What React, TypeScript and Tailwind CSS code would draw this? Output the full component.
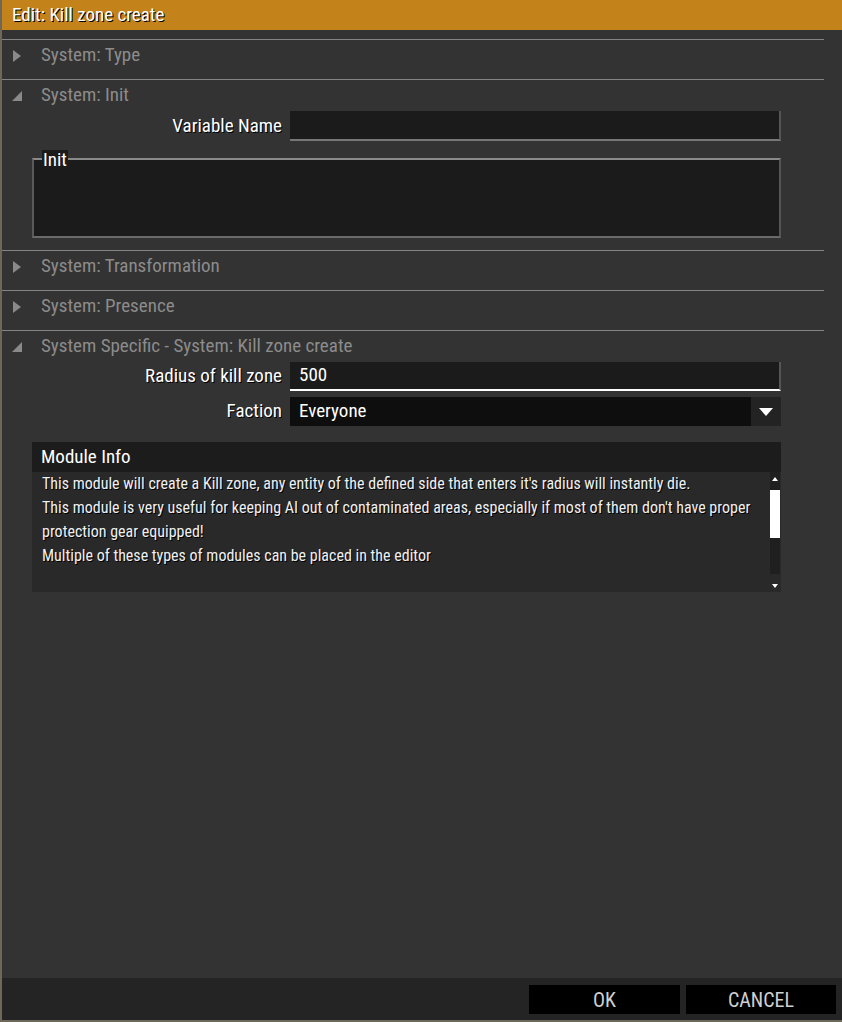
import React from "react";

const font = "font-['Liberation_Sans_Narrow','Roboto_Condensed','Roboto',sans-serif]";

function Caret({ open }: { open: boolean }) {
  if (open) {
    return (
      <svg width="12" height="12" viewBox="0 0 12 12" className="ml-[9px] mr-[18px]">
        <polygon points="11,1 11,11 1,11" fill="#8a8a8a" />
      </svg>
    );
  }
  return (
    <svg width="12" height="12" viewBox="0 0 12 12" className="ml-[9px] mr-[18px]">
      <polygon points="2,0 10,6 2,12" fill="#8a8a8a" />
    </svg>
  );
}

function Section({
  title,
  open,
  children,
  padBottom = "pb-[8px]",
}: {
  title: string;
  open?: boolean;
  children?: React.ReactNode;
  padBottom?: string;
}) {
  return (
    <div className={`border-t border-[#858585] mr-[18px] ${padBottom}`}>
      <div className="h-[31px] flex items-center">
        <Caret open={!!open} />
        <span className="text-[19px] text-[#8c8c8c]">{title}</span>
      </div>
      {children}
    </div>
  );
}

function Label({ text }: { text: string }) {
  return (
    <div className="w-[288px] pr-[8px] text-right text-[19px] text-white [text-shadow:1px_1px_0_#000]">
      {text}
    </div>
  );
}

export default function App() {
  return (
    <div className={`w-[842px] h-[1022px] bg-[#6d685a] pl-[2px] pb-[2px] ${font}`}>
      <div className="h-full flex flex-col bg-[#333333]">
        <div className="h-[30px] bg-[#c4821a] flex items-center pl-[10px] text-[19px] text-white [text-shadow:1px_1px_0_#000]">
          Edit: Kill zone create
        </div>

        <div className="flex-1 pt-[9px]">
          <Section title="System: Type" />

          <Section title="System: Init" open padBottom="pb-[12px]">
            <div className="flex items-center">
              <Label text="Variable Name" />
              <div className="w-[491px] h-[30px] bg-[#1b1b1b] border-b-2 border-r-2 border-b-[#777777] border-r-[#555555]" />
            </div>
            <div className="relative ml-[30px] mt-[17px] w-[749px] h-[80px] bg-[#1b1b1b] border-t-2 border-t-[#8a8a8a] border-l-2 border-l-[#5a5a5a] border-b-2 border-b-[#6a6a6a] border-r-2 border-r-[#555555]">
              <span className="absolute left-[8px] top-[-10px] px-[1px] bg-[#1b1b1b] leading-[19px] text-[19px] text-white">
                Init
              </span>
            </div>
          </Section>

          <Section title="System: Transformation" />
          <Section title="System: Presence" />

          <Section title="System Specific - System: Kill zone create" open>
            <div className="flex items-center">
              <Label text="Radius of kill zone" />
              <div className="w-[491px] h-[29px] bg-[#1b1b1b] border-b-2 border-r-2 border-b-white border-r-[#555555] flex items-center pl-[9px] text-[19px] text-white">
                500
              </div>
            </div>
            <div className="flex items-center mt-[6px]">
              <Label text="Faction" />
              <div className="w-[491px] h-[29px] flex">
                <div className="flex-1 bg-[#0e0e0e] flex items-center pl-[9px] text-[19px] text-white">
                  Everyone
                </div>
                <div className="w-[30px] bg-[#222322] flex items-center justify-center">
                  <svg width="14" height="8" viewBox="0 0 14 8">
                    <polygon points="0,0 14,0 7,8" fill="#ffffff" />
                  </svg>
                </div>
              </div>
            </div>

            <div className="ml-[30px] mt-[16px] w-[749px]">
              <div className="h-[30px] bg-[#1c1c1c] flex items-center pl-[9px] text-[19px] text-white">
                Module Info
              </div>
              <div className="h-[120px] bg-[#292929] flex">
                <div className="flex-1 pl-[10px] pr-[8px] text-[16px] leading-[24px] text-[#f0f0f0] [text-shadow:1px_1px_0_#000]">
                  <p>This module will create a Kill zone, any entity of the defined side that enters it's radius will instantly die.</p>
                  <p>
                    This module is very useful for keeping AI out of contaminated areas, especially if most of them don't have proper
                    protection gear equipped!
                  </p>
                  <p>Multiple of these types of modules can be placed in the editor</p>
                </div>
                <div className="w-[10px] mr-[1px] flex flex-col items-center">
                  <div className="h-[14px] w-full bg-[#1f1f1f] flex items-center justify-center">
                    <svg width="6" height="4" viewBox="0 0 6 4">
                      <polygon points="3,0 6,4 0,4" fill="#ffffff" />
                    </svg>
                  </div>
                  <div className="w-full h-[4px] bg-[#1f1f1f]" />
                  <div className="w-full h-[48px] bg-white" />
                  <div className="w-full h-[36px] bg-[#1f1f1f]" />
                  <div className="flex-1" />
                  <div className="h-[12px] w-full flex items-center justify-center">
                    <svg width="6" height="4" viewBox="0 0 6 4">
                      <polygon points="0,0 6,0 3,4" fill="#ffffff" />
                    </svg>
                  </div>
                </div>
              </div>
            </div>
          </Section>
        </div>

        <div className="h-[42px] bg-[#242424] flex items-center justify-end gap-[6px] pr-[6px]">
          <button className="w-[151px] h-[29px] bg-black text-[20px] text-[#d0d0d0]">OK</button>
          <button className="w-[150px] h-[29px] bg-black text-[20px] text-[#d0d0d0]">CANCEL</button>
        </div>
      </div>
    </div>
  );
}
